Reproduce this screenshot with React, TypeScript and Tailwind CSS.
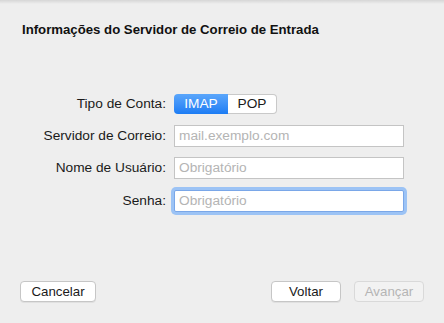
const font = { fontFamily: '"Liberation Sans", Arial, sans-serif' };

function Field({ placeholder, focused }: { placeholder: string; focused?: boolean }) {
  return (
    <div
      className={
        focused
          ? "h-[22px] w-[230px] rounded-[2px] border border-[#7aa7e8] bg-white ring-[3px] ring-[#9cc3f5] flex items-center px-[4px]"
          : "h-[22px] w-[230px] border border-[#c4c4c4] bg-white flex items-center px-[4px]"
      }
    >
      <span className="text-[13.7px] text-[#b4b4b4] leading-none">{placeholder}</span>
    </div>
  );
}

function Button({ label, disabled, width }: { label: string; disabled?: boolean; width: string }) {
  return (
    <div
      className={
        (disabled
          ? "border-[#d9d9d9] bg-[#f2f2f2] text-[#b5b5b5] "
          : "border-[#c6c6c6] bg-white text-[#1a1a1a] shadow-[0_1px_0_rgba(0,0,0,0.06)] ") +
        width +
        " h-[21px] rounded-[4px] border flex items-center justify-center text-[13.3px]"
      }
    >
      {label}
    </div>
  );
}

export default function App() {
  return (
    <div
      style={font}
      className="relative flex h-[323px] w-[444px] flex-col bg-[#eeeeee] text-[#1a1a1a]"
    >
      {/* top shadow */}
      <div className="absolute inset-x-0 top-0 h-[4px] bg-gradient-to-b from-[#d6d6d6] to-[#eeeeee]" />

      <h1 className="pl-[22px] pt-[22px] text-[13.2px] font-bold leading-[16px] text-[#111]">
        Informações do Servidor de Correio de Entrada
      </h1>

      <div className="mt-[56px] grid grid-cols-[166px_230px] gap-x-[8px] text-[13.7px]">
        <div className="flex h-[20px] items-center justify-end">Tipo de Conta:</div>
        <div className="flex h-[20px]">
          <div className="flex h-[20px] w-[54px] items-center justify-center rounded-l-[4px] bg-gradient-to-b from-[#5aa6fb] to-[#1b7cf4] text-white">
            IMAP
          </div>
          <div className="flex h-[20px] w-[49px] items-center justify-center rounded-r-[4px] border border-l-0 border-[#c9c9c9] bg-white">
            POP
          </div>
        </div>

        <div className="mt-[11px] flex h-[22px] items-center justify-end">Servidor de Correio:</div>
        <div className="mt-[11px]">
          <Field placeholder="mail.exemplo.com" />
        </div>

        <div className="mt-[10px] flex h-[22px] items-center justify-end">Nome de Usuário:</div>
        <div className="mt-[10px]">
          <Field placeholder="Obrigatório" />
        </div>

        <div className="mt-[11px] flex h-[22px] items-center justify-end">Senha:</div>
        <div className="mt-[11px]">
          <Field placeholder="Obrigatório" focused />
        </div>
      </div>

      <div className="mt-auto mb-[21px] flex items-center px-[20px]">
        <Button label="Cancelar" width="w-[76px]" />
        <div className="ml-auto flex gap-[13px]">
          <Button label="Voltar" width="w-[70px]" />
          <Button label="Avançar" width="w-[70px]" disabled />
        </div>
      </div>
    </div>
  );
}
